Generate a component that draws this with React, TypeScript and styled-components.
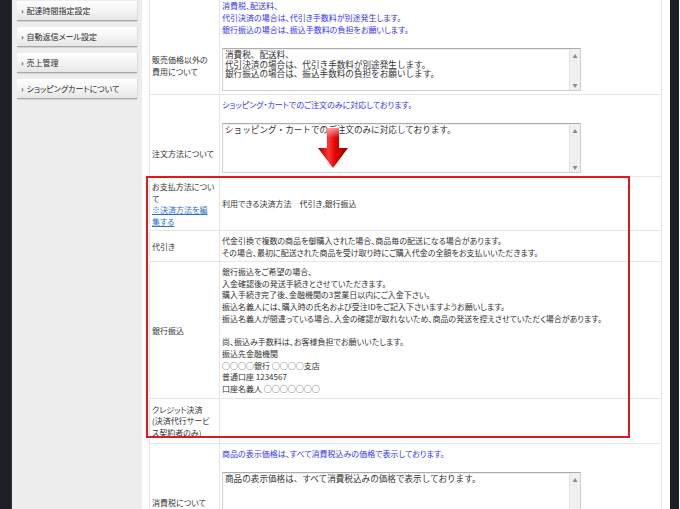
import styled, { createGlobalStyle } from "styled-components";

const FONT = `"Noto Sans CJK JP", "Noto Sans", sans-serif`;

const GlobalStyle = createGlobalStyle`
  *, *::before, *::after { box-sizing: border-box; }
  html, body { margin: 0; padding: 0; }
  body {
    font-family: ${FONT};
    color: #333;
    background: #fff;
    font-feature-settings: "palt";
  }
`;

const Page = styled.div`
  display: flex;
  height: 509px;
  overflow: hidden;
`;

const DarkEdge = styled.div<{ $w: number }>`
  flex: 0 0 ${(p) => p.$w}px;
  background: #1c1f24;
`;

const Sidebar = styled.nav`
  flex: 0 0 131px;
  display: flex;
  flex-direction: column;
  gap: 6px;
  padding: 1px 0 0 5px;
  background: #ededed;
  border-left: 1px solid #34373c;
`;

const MenuButton = styled.div`
  display: flex;
  align-items: center;
  gap: 3px;
  width: 120px;
  height: 20px;
  padding-left: 4px;
  font-size: 8px;
  color: #2b2b2b;
  background: linear-gradient(#ffffff, #f4f4f4 50%, #e6e6e6);
  border-bottom: 1px solid #a9a9a9;
  box-shadow: 0 1px 0 #d2d2d2, 1px 0 0 #dcdcdc;
`;

const Caret = styled.span`
  font-size: 8px;
  font-weight: bold;
  color: #444;
`;

const Main = styled.main`
  position: relative;
  flex: 0 0 528px;
  padding-left: 7px;
  background: #fff;
`;

const Table = styled.div`
  width: 513px;
  margin-top: -4px;
  border-left: 1px solid #e6e6e6;
  border-right: 1px solid #e6e6e6;
`;

const Row = styled.div`
  display: grid;
  grid-template-columns: 70px 1fr;
  border-bottom: 1px solid #e6e6e6;
`;

const Label = styled.div<{ $bottom?: boolean; $tall?: boolean }>`
  display: flex;
  flex-direction: column;
  justify-content: ${(p) => (p.$bottom ? "flex-end" : "center")};
  padding: ${(p) => (p.$tall ? "5px" : "4px")} 2px
    ${(p) => (p.$bottom ? "17px" : p.$tall ? "5px" : "3px")} 2px;
  border-right: 1px solid #e6e6e6;
  font-size: 8px;
  line-height: 11.5px;
  white-space: nowrap;
`;

const Value = styled.div<{ $lh?: number }>`
  display: flex;
  flex-direction: column;
  justify-content: center;
  padding: 4px 2px 3px;
  font-size: 8px;
  line-height: ${(p) => p.$lh ?? 11.5}px;
  white-space: nowrap;
`;

const Note = styled.div`
  color: #3434f2;
  line-height: 12px;
  margin-bottom: 12px;
`;

const EditLink = styled.a`
  color: #2a6fd6;
  text-decoration: underline;
`;

const TextBox = styled.div<{ $h: number }>`
  display: flex;
  width: 359px;
  height: ${(p) => p.$h}px;
  background: #fff;
  border: 1px solid #cfcfcf;
  border-top-color: #ababab;
  box-shadow: inset 0 1px 1px rgba(0, 0, 0, 0.08);
`;

const TextBoxText = styled.div`
  flex: 1;
  padding: 1px 2px;
  font-size: 8.6px;
  line-height: 9.5px;
  font-feature-settings: normal;
  white-space: pre;
  overflow: hidden;
  color: #333;
`;

const ScrollBar = styled.div`
  flex: 0 0 11px;
  display: flex;
  flex-direction: column;
  justify-content: space-between;
  align-items: center;
  padding: 4px 0 3px;
  background: #f0f0f0;
  border-left: 1px solid #e3e3e3;
  font-size: 5px;
  line-height: 5px;
  color: #8a8a8a;
`;

const RedFrame = styled.div`
  position: absolute;
  left: 4px;
  top: 176px;
  width: 484px;
  height: 262px;
  border: 2px solid #e01820;
  pointer-events: none;
`;

const ArrowMark = styled.svg`
  position: absolute;
  left: 175px;
  top: 126px;
`;

function Field({ h, text }: { h: number; text: string }) {
  return (
    <TextBox $h={h}>
      <TextBoxText>{text}</TextBoxText>
      <ScrollBar>
        <span>▲</span>
        <span>▼</span>
      </ScrollBar>
    </TextBox>
  );
}

function Arrow() {
  return (
    <ArrowMark width="32" height="44" viewBox="0 0 32 44">
      <defs>
        <linearGradient id="arrowBody" x1="0" y1="0" x2="1" y2="0">
          <stop offset="0" stopColor="#9c0000" />
          <stop offset="0.35" stopColor="#ff3434" />
          <stop offset="0.6" stopColor="#e00000" />
          <stop offset="1" stopColor="#8a0000" />
        </linearGradient>
        <linearGradient id="arrowShine" x1="0" y1="0" x2="0" y2="1">
          <stop offset="0" stopColor="#ffffff" stopOpacity="0.55" />
          <stop offset="0.5" stopColor="#ffffff" stopOpacity="0" />
        </linearGradient>
      </defs>
      <path d="M10 2 H22 V22 H31 L16 42 L1 22 H10 Z" fill="url(#arrowBody)" />
      <path d="M10 2 H22 V22 H10 Z" fill="url(#arrowShine)" />
    </ArrowMark>
  );
}

const MENU = [
  "配達時間指定設定",
  "自動返信メール設定",
  "売上管理",
  "ショッピングカートについて",
];

const BANK_LINES = [
  "銀行振込をご希望の場合、",
  "入金確認後の発送手続きとさせていただきます。",
  "購入手続き完了後、金融機関の3営業日以内にご入金下さい。",
  "振込名義人には、購入時の氏名および受注IDをご記入下さいますようお願いします。",
  "振込名義人が間違っている場合、入金の確認が取れないため、商品の発送を控えさせていただく場合があります。",
  "\u00a0",
  "尚、振込み手数料は、お客様負担でお願いいたします。",
  "振込先金融機関",
  "○○○○銀行 ○○○○支店",
  "普通口座 1234567",
  "口座名義人 ○○○○○○○",
];

export default function App() {
  return (
    <>
      <GlobalStyle />
      <Page>
        <DarkEdge $w={11} />
        <Sidebar>
          {MENU.map((item) => (
            <MenuButton key={item}>
              <Caret>›</Caret>
              {item}
            </MenuButton>
          ))}
        </Sidebar>
        <Main>
          <Table>
            <Row>
              <Label $bottom>
                <span>販売価格以外の</span>
                <span>費用について</span>
              </Label>
              <Value>
                <Note>
                  消費税、配送料、
                  <br />
                  代引決済の場合は、代引き手数料が別途発生します。
                  <br />
                  銀行振込の場合は、振込手数料の負担をお願いします。
                </Note>
                <Field
                  h={43}
                  text={
                    "消費税、配送料、\n代引決済の場合は、代引き手数料が別途発生します。\n銀行振込の場合は、振込手数料の負担をお願いします。"
                  }
                />
              </Value>
            </Row>
            <Row>
              <Label $bottom>注文方法について</Label>
              <Value>
                <Note>ショッピング・カートでのご注文のみに対応しております。</Note>
                <Field h={50} text="ショッピング・カートでのご注文のみに対応しております。" />
              </Value>
            </Row>
            <Row>
              <Label>
                <span>お支払方法につい</span>
                <span>て</span>
                <EditLink href="#">
                  ※決済方法を編
                  <br />
                  集する
                </EditLink>
              </Label>
              <Value>利用できる決済方法　代引き,銀行振込</Value>
            </Row>
            <Row>
              <Label>代引き</Label>
              <Value>
                <span>代金引換で複数の商品を御購入された場合、商品毎の配送になる場合があります。</span>
                <span>その場合、最初に配送された商品を受け取り時にご購入代金の全額をお支払いいただきます。</span>
              </Value>
            </Row>
            <Row>
              <Label>銀行振込</Label>
              <Value $lh={11.7}>
                {BANK_LINES.map((line, i) => (
                  <span key={i}>{line}</span>
                ))}
              </Value>
            </Row>
            <Row>
              <Label $tall>
                <span>クレジット決済</span>
                <span>(決済代行サービ</span>
                <span>ス契約者のみ)</span>
              </Label>
              <Value />
            </Row>
            <Row>
              <Label $bottom>消費税について</Label>
              <Value>
                <Note>商品の表示価格は、すべて消費税込みの価格で表示しております。</Note>
                <Field h={50} text="商品の表示価格は、すべて消費税込みの価格で表示しております。" />
              </Value>
            </Row>
          </Table>
          <RedFrame />
          <Arrow />
        </Main>
        <DarkEdge $w={9} />
      </Page>
    </>
  );
}
